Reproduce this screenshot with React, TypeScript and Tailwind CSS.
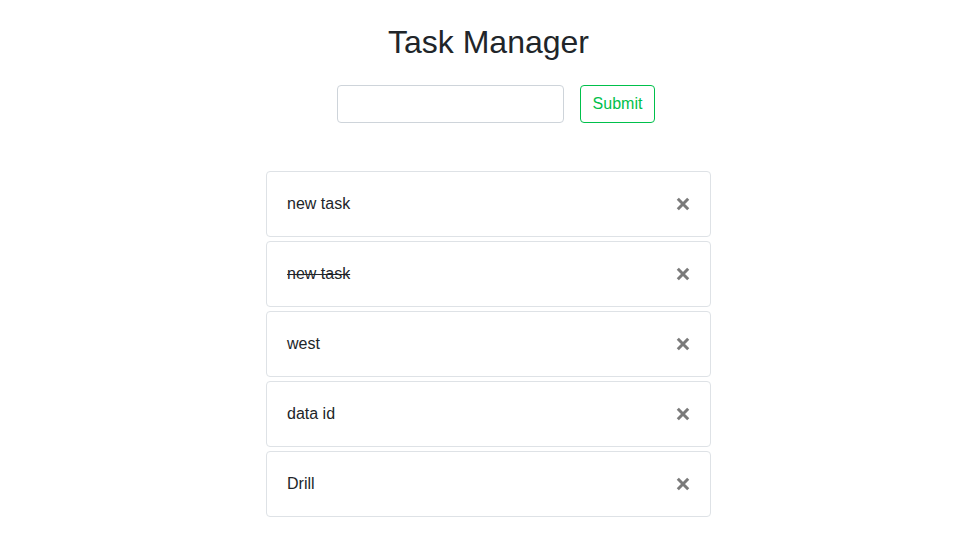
import React from "react";

const tasks = [
  { text: "new task", done: false },
  { text: "new task", done: true },
  { text: "west", done: false },
  { text: "data id", done: false },
  { text: "Drill", done: false },
];

function XIcon() {
  return (
    <svg width="14" height="14" viewBox="0 0 14 14" aria-hidden="true">
      <path d="M1.8 1.8 L12.2 12.2 M12.2 1.8 L1.8 12.2" stroke="#7a7a7a" strokeWidth="3" strokeLinecap="butt" />
    </svg>
  );
}

export default function App() {
  return (
    <div className="w-full min-h-[553px] bg-white text-[#212529]" style={{ fontFamily: '"Liberation Sans", Arial, sans-serif' }}>
      <div className="flex flex-col items-center pl-[17px]">
        <h1 className="mt-[23px] text-[32px] leading-[38px] font-normal">Task Manager</h1>
        <div className="mt-[24px] flex items-center pl-[15px]">
          <input className="w-[227px] h-[38px] rounded-[4px] border border-[#ced4da] px-3 outline-none" />
          <button className="ml-[16px] h-[38px] w-[75px] rounded-[4px] border border-[#00c04b] text-[#00c04b] text-[16px]">Submit</button>
        </div>
        <ul className="mt-[48px] w-[445px] flex flex-col gap-[4px]">
          {tasks.map((t, i) => (
            <li key={i} className="h-[66px] rounded-[4px] border border-[#dee2e6] flex items-center justify-between pl-[20px] pr-[20px]">
              <span className={"text-[16px] leading-[24px] " + (t.done ? "line-through" : "")}>{t.text}</span>
              <XIcon />
            </li>
          ))}
        </ul>
      </div>
    </div>
  );
}
